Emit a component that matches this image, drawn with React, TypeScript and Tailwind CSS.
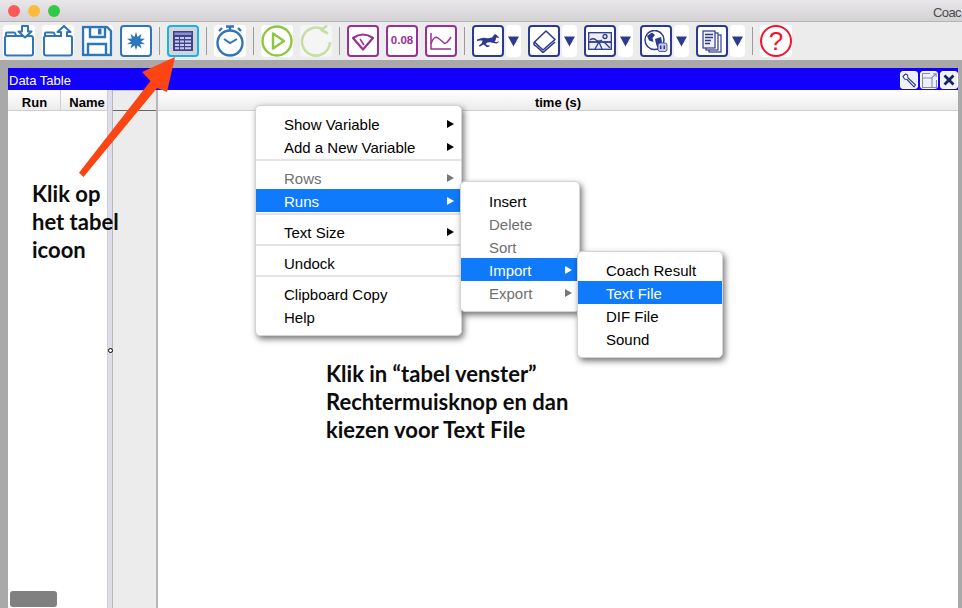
import React from 'react';

const BLUE = '#2f75b9';
const GREEN = '#8dc63f';
const PURPLE = '#9a2f96';
const NAVY = '#2c3a8f';

const Tile: React.FC<{ className?: string; children?: React.ReactNode }> = ({ className = '', children }) => (
  <div className={`w-8 h-8 shrink-0 bg-white rounded-[4px] flex items-center justify-center ${className}`}>{children}</div>
);

const Framed: React.FC<{ color: 'blue' | 'purple' | 'navy'; children?: React.ReactNode }> = ({ color, children }) => {
  const border = color === 'blue' ? 'border-[#2f75b9]' : color === 'purple' ? 'border-[#9a2f96]' : 'border-[#2c3a8f]';
  return <Tile className={`border-[2.5px] rounded-[3px] ${border}`}>{children}</Tile>;
};

const Sep = () => <div className="w-px h-[28px] bg-[#9a9a9a] shrink-0" />;

const Caret = () => (
  <div className="w-[15px] h-8 shrink-0 bg-white rounded-[4px] flex items-center justify-center">
    <svg width="11" height="11" viewBox="0 0 11 11">
      <path d="M0 0.5H11L5.5 10.5Z" fill={NAVY} />
    </svg>
  </div>
);

const FolderIcon: React.FC<{ up?: boolean }> = ({ up }) => (
  <svg width="32" height="32" viewBox="0 0 32 32" fill="none" stroke={BLUE} strokeWidth="2">
    <path d="M3 11V8.5Q3 7.5 4 7.5H11Q12 7.5 12.5 9L13 11" strokeLinejoin="round" />
    <rect x="2" y="11" width="28" height="19.5" rx="2" />
    {up ? (
      <path d="M19 12V7H15.5L22 1L28.5 7H25V12" strokeLinejoin="round" fill="#ffffff" />
    ) : (
      <path d="M19 1V6.5H15.5L22 12.5L28.5 6.5H25V1Z" strokeLinejoin="round" fill="#ffffff" />
    )}
  </svg>
);

const SaveIcon = () => (
  <svg width="32" height="32" viewBox="0 0 32 32" fill="none" stroke={BLUE} strokeWidth="2.4">
    <path d="M2 2H26L30 6V30H2Z" strokeLinejoin="round" />
    <path d="M9 2V12H24V2" />
    <path d="M7 30V19H25V30" />
    <rect x="17" y="3.5" width="3.5" height="6" fill={BLUE} stroke="none" />
  </svg>
);

const BurstIcon = () => (
  <svg width="18" height="18" viewBox="0 0 18 18">
    <path
      d="M9 0L10.6 5L14.5 1.8L13.2 6.5L18 6.8L14 9.5L18 12.2L13.2 12L14.5 16.5L10.6 13.5L9 18L7.4 13.5L3.5 16.5L4.8 12L0 12.2L4 9.5L0 6.8L4.8 6.5L3.5 1.8L7.4 5Z"
      fill={BLUE}
    />
  </svg>
);

const TableIcon = () => (
  <svg width="20" height="20" viewBox="0 0 20 20">
    <rect x="0" y="0" width="20" height="20" fill="#3c4394" />
    <g fill="#c9cbe6">
      <rect x="1.5" y="1.5" width="17" height="2.5" fill="#8a8fc4" />
      <path d="M2 6h4v2H2zM7 6h4v2H7zM12 6h6v2h-6zM2 9.5h4v2H2zM7 9.5h4v2H7zM12 9.5h6v2h-6zM2 13h4v2H2zM7 13h4v2H7zM12 13h6v2h-6zM2 16.2h4v2H2zM7 16.2h4v2H7zM12 16.2h6v2h-6z" />
    </g>
  </svg>
);

const TimerIcon = () => (
  <svg width="32" height="32" viewBox="0 0 32 32" fill="none" stroke={BLUE}>
    <circle cx="16" cy="18" r="12.5" strokeWidth="2.4" />
    <path d="M12 1.5H20M16 1.5V5" strokeWidth="2.4" />
    <path d="M5 6L8 3M27 6L24 3" strokeWidth="2.4" />
    <path d="M10 14L16 18L23 14" strokeWidth="2" />
  </svg>
);

const PlayIcon = () => (
  <svg width="32" height="32" viewBox="0 0 32 32" fill="none" stroke={GREEN} strokeWidth="2.4">
    <circle cx="16" cy="16" r="14.5" />
    <path d="M12 8.5L23 16L12 23.5Z" strokeLinejoin="round" />
  </svg>
);

const RedoIcon = () => (
  <svg width="32" height="32" viewBox="0 0 32 32" fill="none" stroke="#c6dfa4" strokeWidth="2.6">
    <path d="M23 4.5A14 14 0 1 0 30 17" />
    <path d="M27 0.5L21.5 5L28 8.5" strokeLinejoin="round" />
  </svg>
);

const GaugeIcon = () => (
  <svg width="22" height="19" viewBox="0 0 22 19" fill="none" stroke={PURPLE} strokeWidth="2.2">
    <path d="M1 6Q11 -1 21 6L11 17.5Z" strokeLinejoin="round" />
    <path d="M8 7L12 13" strokeWidth="1.5" />
  </svg>
);

const GraphIcon = () => (
  <svg width="22" height="17" viewBox="0 0 22 17" fill="none" stroke={PURPLE} strokeWidth="1.5">
    <path d="M1 0V16H21" />
    <path d="M1 11Q4 2 8 5T14 10T21 4" />
  </svg>
);

const HorseIcon = () => (
  <svg width="22" height="14" viewBox="0 0 22 14">
    <path
      d="M0 5.5L4 4.2L7 3.8Q11 4.8 15 3.6L17 1L18 0L19.2 0.8L22 3.2L21.2 4L19.2 3.4L18.6 6.2L17.4 7.6L20 8.2L21.5 7L21.8 8L20 9.6L16 9L13.5 8.2L10.5 8.6L8.5 10L11 11.6L12.5 11L12.5 12.4L10 13.2L6.5 10.6L3 12.6L1.5 12L5 9L5.5 6.5L3 6.5L0 7Z"
      fill={NAVY}
    />
  </svg>
);

const BookIcon = () => (
  <svg width="23" height="23" viewBox="0 0 23 23" fill="none" stroke={NAVY} strokeWidth="1.6">
    <path d="M13 1L22 9.5L10 20L1.5 12Z" strokeLinejoin="round" />
    <path d="M1.5 12Q0 15 3 16L10 22.5L22 12" strokeLinejoin="round" />
  </svg>
);

const PictureIcon = () => (
  <svg width="24" height="18" viewBox="0 0 24 18" fill="none" stroke={NAVY} strokeWidth="1.3">
    <rect x="0.7" y="0.7" width="22.6" height="16.6" fill="#eef0f8" />
    <circle cx="17" cy="4.5" r="2" />
    <path d="M1 10H23" strokeWidth="1.8" />
    <path d="M2 8Q5 5.5 8 8T14 8" />
    <path d="M7 17L11 10L14 17M16 10L22 16" />
  </svg>
);

const GlobeIcon = () => (
  <svg width="24" height="22" viewBox="0 0 24 22">
    <circle cx="10.5" cy="10" r="9.5" fill="#ffffff" stroke={NAVY} strokeWidth="1.5" />
    <path d="M3 6L8 2.5L11 5L8.5 8L9.5 12L5 10.5ZM11 9L17 7L18 12L13.5 18L12 14Z" fill={NAVY} />
    <rect x="14" y="13" width="9" height="8.5" rx="2" fill="#c9cde8" stroke={NAVY} strokeWidth="0.8" />
    <path d="M16 15.5h1.5v3.5H16zM19.5 15.5H21v3.5h-1.5z" fill={NAVY} />
  </svg>
);

const DocsIcon = () => (
  <svg width="20" height="23" viewBox="0 0 20 23" fill="#ffffff" stroke={NAVY} strokeWidth="1.2">
    <rect x="7" y="5" width="12" height="17" />
    <rect x="4" y="3" width="12" height="17" />
    <rect x="1" y="1" width="12" height="17" fill="#eef0f8" />
    <path d="M3 4.5H11M3 7.5H11M3 10.5H9M3 13.5H8" strokeWidth="1.3" />
  </svg>
);

const MenuRow: React.FC<{ label: string; arrow?: boolean; dim?: boolean; active?: boolean }> = ({
  label,
  arrow,
  dim,
  active,
}) => (
  <div
    className={`h-[23px] flex items-center justify-between pl-7 pr-[7px] ${
      active ? 'bg-[#0f7afb] text-white' : dim ? 'text-[#6f6f6f]' : 'text-black'
    }`}
  >
    <span className="pt-px">{label}</span>
    {arrow && (
      <svg width="7" height="8" viewBox="0 0 7 8">
        <path d="M0 0L7 4L0 8Z" fill={active ? '#ffffff' : dim ? '#777777' : '#000000'} />
      </svg>
    )}
  </div>
);

const MenuSep: React.FC<{ h: string }> = ({ h }) => (
  <div className={`${h} pt-px`}>
    <div className="h-[2px] bg-[#e4e4e4]" />
  </div>
);

const menuBox =
  'absolute bg-white rounded-[5px] border border-[#d4d4d4] shadow-[2px_3px_6px_rgba(0,0,0,0.55)] text-[15px] leading-none';

const noteText = "absolute text-[22px] leading-[28px] font-bold text-[#0c0c0c] font-['Lato',sans-serif] whitespace-nowrap";

export default function App() {
  return (
    <div className="relative w-[962px] h-[608px] overflow-hidden flex flex-col bg-[#a9a9a9] font-['Liberation_Sans',Arial,sans-serif] text-black">
      {/* title bar */}
      <div className="h-[22px] shrink-0 relative flex items-center pl-2 gap-2 bg-gradient-to-b from-[#e9e7e9] to-[#d3d1d3] border-b border-[#b4b4b4]">
        <div className="w-3 h-3 rounded-full bg-[#fc5a55]" />
        <div className="w-3 h-3 rounded-full bg-[#fdbb3e]" />
        <div className="w-3 h-3 rounded-full bg-[#32c848]" />
        <span className="absolute left-[933px] top-[3px] text-[13px] tracking-[-0.6px] text-[#4a4a4a] whitespace-nowrap">Coac</span>
      </div>

      {/* toolbar */}
      <div className="h-[38px] shrink-0 flex items-center gap-[7px] pl-[3px] bg-[#ececec]">
        <Tile>
          <FolderIcon />
        </Tile>
        <Tile>
          <FolderIcon up />
        </Tile>
        <Tile>
          <SaveIcon />
        </Tile>
        <Framed color="blue">
          <BurstIcon />
        </Framed>
        <Sep />
        <Tile className="border-[2.5px] rounded-[3px] border-[#12b5ea] !bg-[#d4d4d4]">
          <TableIcon />
        </Tile>
        <Sep />
        <Tile>
          <TimerIcon />
        </Tile>
        <Sep />
        <Tile>
          <PlayIcon />
        </Tile>
        <Tile className="!bg-[#f5f5f5]">
          <RedoIcon />
        </Tile>
        <Sep />
        <Framed color="purple">
          <GaugeIcon />
        </Framed>
        <Framed color="purple">
          <span className="text-[11.5px] font-bold text-[#9a2f96]">0.08</span>
        </Framed>
        <Framed color="purple">
          <GraphIcon />
        </Framed>
        <Sep />
        <div className="flex gap-[2px] shrink-0">
          <Framed color="navy">
            <HorseIcon />
          </Framed>
          <Caret />
        </div>
        <div className="flex gap-[2px] shrink-0">
          <Framed color="navy">
            <BookIcon />
          </Framed>
          <Caret />
        </div>
        <div className="flex gap-[2px] shrink-0">
          <Framed color="navy">
            <PictureIcon />
          </Framed>
          <Caret />
        </div>
        <div className="flex gap-[2px] shrink-0">
          <Framed color="navy">
            <GlobeIcon />
          </Framed>
          <Caret />
        </div>
        <div className="flex gap-[2px] shrink-0">
          <Framed color="navy">
            <DocsIcon />
          </Framed>
          <Caret />
        </div>
        <Sep />
        <Tile>
          <div className="w-8 h-8 rounded-full border-[2.5px] border-[#f5122f] flex items-center justify-center text-[26px] leading-none text-[#f5122f]">
            ?
          </div>
        </Tile>
      </div>

      {/* data table window */}
      <div className="flex-1 min-h-0 flex flex-col mt-2 ml-2 mr-1">
        <div className="h-[22px] shrink-0 bg-[#1200ff] flex items-center justify-between">
          <span className="text-[13px] leading-none text-white pl-px pt-[3px]">Data Table</span>
          <div className="flex gap-[2px] pt-[2px]">
            <div className="w-[18px] h-[18px] rounded-[3px] border-[1.5px] border-white bg-[#eef0fa] flex items-center justify-center">
              <svg width="15" height="15" viewBox="0 0 15 15" fill="#ffffff" stroke="#2c3a8f" strokeWidth="1.1">
                <path d="M1 3.5L3.5 1L5.5 2L6 5L13.5 12L12 13.8L5 6.5L2.5 6Z" strokeLinejoin="round" />
              </svg>
            </div>
            <div className="w-[18px] h-[18px] rounded-[3px] border-[1.5px] border-white bg-[#eef0fa] flex items-center justify-center">
              <svg width="15" height="15" viewBox="0 0 15 15" fill="none" stroke="#7f8cb8" strokeWidth="1.1">
                <path d="M0.5 0.5H8M14.5 7V14.5H0.5V0.5M0.5 5H10V14.5M9.5 5L14 0.8M11 0.8H14.2V4" />
              </svg>
            </div>
            <div className="w-[18px] h-[18px] rounded-[3px] border-[1.5px] border-white bg-[#eef0fa] flex items-center justify-center">
              <svg width="12" height="12" viewBox="0 0 12 12" fill="none" stroke="#14235e" strokeWidth="2.8">
                <path d="M1.5 1.5L10.5 10.5M10.5 1.5L1.5 10.5" />
              </svg>
            </div>
          </div>
        </div>

        <div className="flex-1 min-h-0 flex bg-white">
          {/* run and name columns */}
          <div className="w-[99px] shrink-0 flex flex-col">
            <div className="h-[21px] flex text-[13px] leading-none font-bold bg-gradient-to-b from-white to-[#ececec] border-b border-[#cfcfcf]">
              <div className="w-[53px] flex items-center justify-center border-r border-[#cfcfcf] pt-[4px] pl-px">Run</div>
              <div className="flex-1 flex items-center justify-center pl-[6px] pt-[4px]">Name</div>
            </div>
          </div>
          {/* splitter */}
          <div className="w-[6px] shrink-0 relative bg-[#dedded] border-r border-[#b8b8b8] border-l border-l-[#cfcfcf]">
            <div className="absolute left-0 top-[258px] w-[5px] h-[5px] rounded-full border border-black bg-white" />
          </div>
          {/* row number column */}
          <div className="w-[45px] shrink-0 bg-[#ececec] border-r-2 border-[#b8b8b8]">
            <div className="h-[21px] border-b-[1.5px] border-[#666666] border-t border-t-[#c8c8c8]" />
          </div>
          {/* time column */}
          <div className="flex-1 flex flex-col">
            <div className="h-[21px] flex items-center justify-center text-[13px] leading-none font-bold pt-[4px] bg-gradient-to-b from-white to-[#ececec] border-b border-[#cfcfcf]">
              time (s)
            </div>
          </div>
        </div>
      </div>

      {/* scrollbar thumb */}
      <div className="absolute left-[10px] top-[591px] w-[47px] h-4 rounded-[3px] bg-[#808080]" />

      {/* red annotation arrow */}
      <svg className="absolute left-0 top-0 pointer-events-none" width="962" height="608" viewBox="0 0 962 608">
        <path d="M79 172.7L83.5 177L157 88L167 92L175 57L142 72L150.5 81Z" fill="#fc4512" />
      </svg>

      {/* annotations */}
      <div className={`${noteText} left-[32px] top-[180px]`}>
        <div>Klik op</div>
        <div>het tabel</div>
        <div>icoon</div>
      </div>
      <div className={`${noteText} left-[326px] top-[360px]`}>
        <div>Klik in “tabel venster”</div>
        <div>Rechtermuisknop en dan</div>
        <div>kiezen voor Text File</div>
      </div>

      {/* context menu */}
      <div className={`${menuBox} left-[255px] top-[105px] w-[207px] pt-[6px] h-[231px]`}>
        <MenuRow label="Show Variable" arrow />
        <MenuRow label="Add a New Variable" arrow />
        <MenuSep h="h-2" />
        <MenuRow label="Rows" arrow dim />
        <MenuRow label="Runs" arrow active />
        <MenuSep h="h-2" />
        <MenuRow label="Text Size" arrow />
        <MenuSep h="h-2" />
        <MenuRow label="Undock" />
        <MenuSep h="h-2" />
        <MenuRow label="Clipboard Copy" />
        <MenuRow label="Help" />
      </div>

      <div className={`${menuBox} left-[460px] top-[181px] w-[120px] pt-[7px] h-[131px]`}>
        <MenuRow label="Insert" />
        <MenuRow label="Delete" dim />
        <MenuRow label="Sort" dim />
        <MenuRow label="Import" arrow active />
        <MenuRow label="Export" arrow dim />
      </div>

      <div className={`${menuBox} left-[577px] top-[251px] w-[146px] pt-[6px] h-[107px]`}>
        <MenuRow label="Coach Result" />
        <MenuRow label="Text File" active />
        <MenuRow label="DIF File" />
        <MenuRow label="Sound" />
      </div>
    </div>
  );
}
